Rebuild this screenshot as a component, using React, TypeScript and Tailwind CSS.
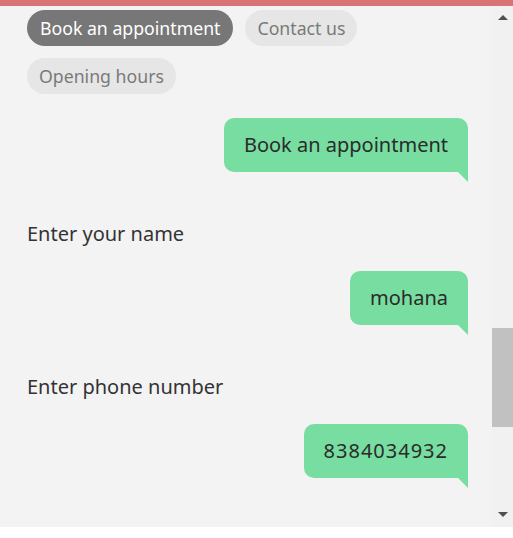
import React from 'react';

const font = { fontFamily: '"Noto Sans", "Open Sans", sans-serif' };

const Bubble = ({ text, className = '' }: { text: string; className?: string }) => (
  <div className="flex justify-end">
    <div className="relative">
      <div className={`bg-[#77dda0] text-[#2b2b2b] text-[20px] leading-[30px] px-5 py-3 rounded-t-[10px] rounded-bl-[10px] ${className}`}>
        {text}
      </div>
      <svg className="absolute right-0 top-full" width="10" height="10" viewBox="0 0 10 10">
        <polygon points="0,0 10,0 10,10" fill="#77dda0" />
      </svg>
    </div>
  </div>
);

const App = () => {
  return (
    <div className="w-[513px] h-[538px] bg-white" style={font}>
      <div className="h-[6px] bg-[#d97474]" />
      <div className="flex h-[521px]">
        <div className="flex-1 bg-[#f3f3f3] overflow-hidden pl-[27px] pr-[24px] pt-[4px]">
          <div className="flex flex-wrap gap-3">
            <span className="h-9 flex items-center px-[13px] rounded-full bg-[#777777] text-white text-[17.7px]">Book an appointment</span>
            <span className="h-9 flex items-center px-[12px] rounded-full bg-[#e6e6e6] text-[#7a7a7a] text-[17.7px]">Contact us</span>
            <span className="h-9 flex items-center px-[12px] rounded-full bg-[#e6e6e6] text-[#7a7a7a] text-[17.7px]">Opening hours</span>
          </div>
          <div className="mt-6">
            <Bubble text="Book an appointment" />
          </div>
          <div className="mt-[47px] text-[20px] leading-[30px] text-[#333]">Enter your name</div>
          <div className="mt-[22px]">
            <Bubble text="mohana" />
          </div>
          <div className="mt-[47px] text-[20px] leading-[30px] text-[#333]">Enter phone number</div>
          <div className="mt-[22px]">
            <Bubble text="8384034932" className="tracking-[1px]" />
          </div>
        </div>
        <div className="w-[21px] bg-[#f1f1f1] flex flex-col items-center">
          <div className="h-[14px] flex items-end justify-center">
            <div className="w-0 h-0 border-l-[5px] border-r-[5px] border-b-[5px] border-l-transparent border-r-transparent border-b-[#505050]" />
          </div>
          <div className="mt-[308px] w-full h-[99px] bg-[#c1c1c1]" />
          <div className="flex-1" />
          <div className="h-[15px] flex items-start justify-center">
            <div className="w-0 h-0 border-l-[5px] border-r-[5px] border-t-[5px] border-l-transparent border-r-transparent border-t-[#505050]" />
          </div>
        </div>
      </div>
    </div>
  );
};

export default App;
